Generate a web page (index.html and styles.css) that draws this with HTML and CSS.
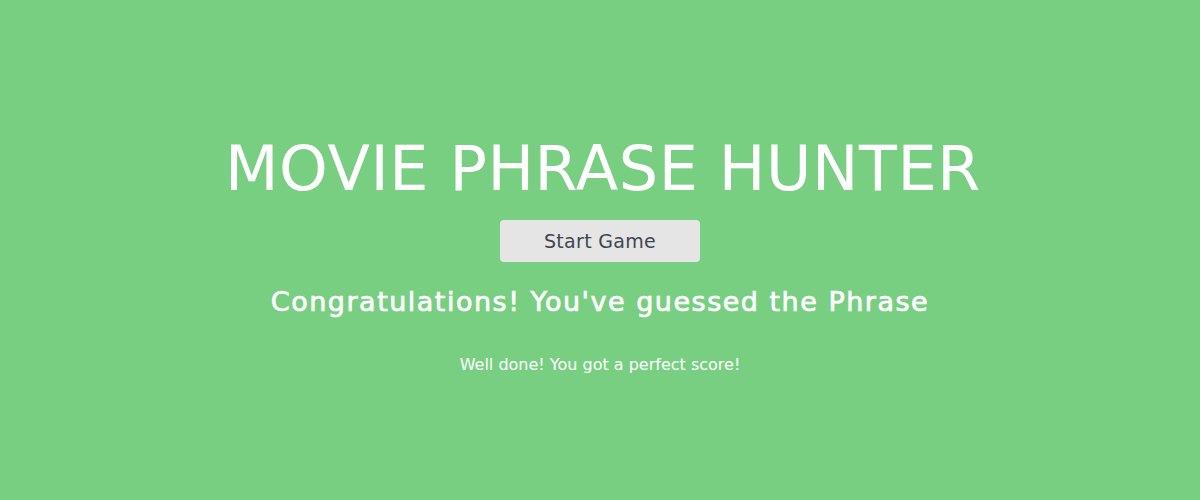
FILE: index.html
```html
<!DOCTYPE html>
<html lang="en">
<head>
<meta charset="utf-8">
<title>Movie Phrase Hunter</title>
<link rel="stylesheet" href="styles.css">
</head>
<body>
<main class="overlay win">
  <h1 class="title">MOVIE PHRASE HUNTER</h1>
  <button class="btn-reset" type="button">Start Game</button>
  <h2 class="game-over-message">Congratulations! You've guessed the Phrase</h2>
  <p class="score-message">Well done! You got a perfect score!</p>
</main>
</body>
</html>
```
FILE: styles.css
```css
html, body {
  margin: 0;
  padding: 0;
}
body {
  font-family: "DejaVu Sans", "Open Sans", sans-serif;
  background: #78cf82;
  color: #fff;
}
.overlay {
  height: 500px;
  display: flex;
  flex-direction: column;
  align-items: center;
  box-sizing: border-box;
  padding-top: 133px;
}
.title {
  margin: 0 0 0 6px;
  font-size: 62px;
  font-weight: 400;
  line-height: 72px;
  letter-spacing: 0.6px;
}
.btn-reset {
  margin-top: 15px;
  width: 200px;
  height: 42px;
  border: 0;
  border-radius: 4px;
  background: #e5e5e5;
  color: #3f4650;
  font-family: inherit;
  font-size: 19px;
  letter-spacing: 0.3px;
  padding: 0;
}
.game-over-message {
  margin: 22px 0 0;
  font-size: 27px;
  font-weight: 400;
  -webkit-text-stroke: 0.7px #fff;
  letter-spacing: 1.5px;
  line-height: 36px;
}
.score-message {
  margin: 35px 0 0;
  font-size: 16px;
  line-height: 20px;
}
```
